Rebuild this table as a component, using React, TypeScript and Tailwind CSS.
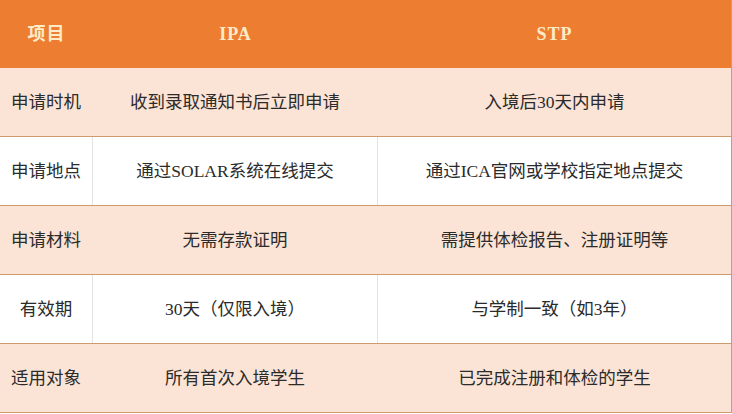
import React from "react";

const rows = [
  { item: "申请时机", ipa: "收到录取通知书后立即申请", stp: "入境后30天内申请" },
  { item: "申请地点", ipa: "通过SOLAR系统在线提交", stp: "通过ICA官网或学校指定地点提交" },
  { item: "申请材料", ipa: "无需存款证明", stp: "需提供体检报告、注册证明等" },
  { item: "有效期", ipa: "30天（仅限入境）", stp: "与学制一致（如3年）" },
  { item: "适用对象", ipa: "所有首次入境学生", stp: "已完成注册和体检的学生" },
];

export default function App() {
  return (
    <div
      className="w-[732px] h-[414px] bg-white text-[#2b2b2b] text-[17.5px]"
      style={{ fontFamily: '"Liberation Serif", "Noto Sans CJK SC", serif' }}
    >
      <div className="w-[732px] border-r border-[#cf9a6c]">
        <div className="grid grid-cols-[93px_285px_1fr] h-[68px] bg-[#ed7d31] text-[#fdebc8] text-[18px] font-semibold tracking-[1px]">
          <div className="flex items-center justify-center">项目</div>
          <div className="flex items-center justify-center">IPA</div>
          <div className="flex items-center justify-center">STP</div>
        </div>
        {rows.map((r, i) => (
          <div
            key={i}
            className={
              "grid grid-cols-[93px_285px_1fr] h-[69px] border-b border-[#cf9a6c] " +
              (i % 2 === 0 ? "bg-[#fbe4d5]" : "bg-white")
            }
          >
            <div
              className={
                "flex items-center justify-center border-r " +
                (i % 2 === 0 ? "border-[#fbe4d5]" : "border-[#e3e3e3]")
              }
            >
              {r.item}
            </div>
            <div
              className={
                "flex items-center justify-center border-r " +
                (i % 2 === 0 ? "border-[#fbe4d5]" : "border-[#e3e3e3]")
              }
            >
              {r.ipa}
            </div>
            <div className="flex items-center justify-center">{r.stp}</div>
          </div>
        ))}
      </div>
    </div>
  );
}
